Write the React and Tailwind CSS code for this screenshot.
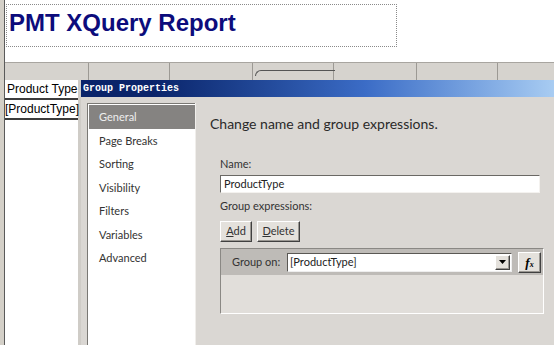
import React from 'react';

const navItems = ['General', 'Page Breaks', 'Sorting', 'Visibility', 'Filters', 'Variables', 'Advanced'];

function RulerCells() {
    const cells = [84, 81, 83, 81, 83, 81];
    return (
        <div className="flex h-[18px] border-t border-[#a8a5a0] bg-[#d6d3ce]">
            {cells.map((w, i) => (
                <div key={i} className="relative h-full border-r border-[#9c9994]" style={{ width: w }}>
                    {i === 3 && (
                        <div className="absolute left-[2px] top-[7px] h-[6px] w-full rounded-tl-[6px] border-l border-t border-[#555]" />
                    )}
                </div>
            ))}
        </div>
    );
}

function ClassicButton({ children, className = '' }) {
    return (
        <div className={`flex items-center justify-center border border-t-white border-l-white border-r-[#404040] border-b-[#404040] bg-[#e4e1dc] shadow-[inset_-1px_-1px_0_#9a9792] ${className}`}>
            {children}
        </div>
    );
}

export default function App() {
    return (
        <div className="flex h-[345px] w-[554px] overflow-hidden bg-white font-['Lato',sans-serif]">
            <div className="w-[5px] shrink-0 border-r border-[#5a5a5a] bg-[#d4d0c8]" />
            <div className="flex min-w-0 flex-1 flex-col">
                <div className="h-[62px] shrink-0 pl-[1px] pt-[4px]">
                    <div className="h-[43px] w-[391px] border border-dotted border-[#8a8a8a] px-[2px]">
                        <div className="mt-[4px] font-['Liberation_Sans',sans-serif] text-[24px] font-bold leading-[28px] text-[#0c0c7c]">
                            PMT XQuery Report
                        </div>
                    </div>
                </div>
                <RulerCells />
                <div className="flex min-h-0 flex-1">
                    <div className="w-[76px] shrink-0 border-r-[3px] border-[#cfccc7] bg-white font-['Liberation_Sans',sans-serif] text-[12px] text-black">
                        <div className="h-[18px] pl-[2px] leading-[18px]">Product Type</div>
                        <div className="h-[2px] bg-[#3c3c3c]" />
                        <div className="flex h-[18px]">
                            <div className="w-[3px] bg-[#e8a020]" />
                            <div className="leading-[18px]">[ProductType]</div>
                        </div>
                        <div className="h-[2px] bg-[#3c3c3c]" />
                    </div>
                    <div className="flex min-w-0 flex-1 flex-col bg-[#dad7d3]">
                        <div className="h-[17px] shrink-0 bg-gradient-to-r from-[#0a246a] from-15% via-[#3b6cc6] via-60% to-[#a8ccf2] pl-[2px] font-['Liberation_Mono',monospace] text-[10px] font-bold leading-[17px] text-white">
                            Group Properties
                        </div>
                        <div className="flex min-h-0 flex-1 pl-[6px] pt-[6px]">
                            <div className="w-[108px] shrink-0 border-l border-t border-[#7a7874] bg-white pt-[1px] pl-[1px] text-[11px] text-[#333]">
                                {navItems.map((item, i) => (
                                    <div
                                        key={item}
                                        className={`h-[23.5px] pl-[10px] leading-[23.5px] ${i === 0 ? 'bg-[#858381] text-[#eeeeee]' : ''}`}
                                    >
                                        {item}
                                    </div>
                                ))}
                            </div>
                            <div className="min-w-0 flex-1 border-l border-[#f0eeeb] pl-[14px] pt-[12px] text-[11px] text-[#333]">
                                <div className="text-[14px] leading-[18px] text-[#2a2a2a]">Change name and group expressions.</div>
                                <div className="pl-[10px]">
                                    <div className="mt-[24px] leading-[14px]">Name:</div>
                                    <div className="mt-[4px] h-[18px] w-[320px] border border-t-[#6a6864] border-l-[#6a6864] border-r-[#f4f2ef] border-b-[#f4f2ef] bg-white pl-[3px] leading-[16px] text-[#222]">
                                        ProductType
                                    </div>
                                    <div className="mt-[6px] leading-[14px]">Group expressions:</div>
                                    <div className="mt-[8px] flex gap-[5px]">
                                        <ClassicButton className="h-[21px] w-[32px]">
                                            <span><u>A</u>dd</span>
                                        </ClassicButton>
                                        <ClassicButton className="h-[21px] w-[43px]">
                                            <span><u>D</u>elete</span>
                                        </ClassicButton>
                                    </div>
                                    <div className="mt-[6px] w-[324px] border border-t-[#8a8884] border-l-[#8a8884] border-r-white border-b-white">
                                        <div className="flex h-[26px] items-center bg-[#bebbb7] pl-[11px]">
                                            <span className="w-[55px]">Group on:</span>
                                            <div className="flex h-[19px] w-[225px] items-center border border-t-[#5a5854] border-l-[#5a5854] border-r-[#eeeeee] border-b-[#eeeeee] bg-white pl-[2px]">
                                                <span className="flex-1 text-[#222]">[ProductType]</span>
                                                <ClassicButton className="mr-[1px] h-[15px] w-[15px]">
                                                    <svg width="7" height="4" viewBox="0 0 7 4">
                                                        <path d="M0 0h7L3.5 4z" fill="#000" />
                                                    </svg>
                                                </ClassicButton>
                                            </div>
                                            <ClassicButton className="ml-[6px] h-[21px] w-[23px]">
                                                <span className="font-['Liberation_Serif',serif] text-[13px] font-bold italic leading-none text-black">
                                                    f<span className="text-[8px]">x</span>
                                                </span>
                                            </ClassicButton>
                                        </div>
                                        <div className="h-[38px] bg-[#e1deda]" />
                                    </div>
                                </div>
                            </div>
                        </div>
                    </div>
                </div>
            </div>
        </div>
    );
}
